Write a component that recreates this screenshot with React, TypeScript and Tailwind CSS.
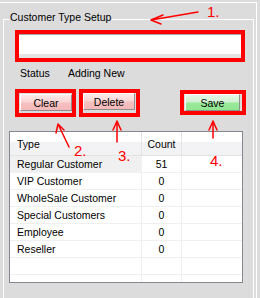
import React from "react";

const rows: [string, string][] = [
  ["Regular Customer", "51"],
  ["VIP Customer", "0"],
  ["WholeSale Customer", "0"],
  ["Special Customers", "0"],
  ["Employee", "0"],
  ["Reseller", "0"],
];

function Btn({ label, green, w }: { label: string; green?: boolean; w: string }) {
  return (
    <div
      className={
        "h-[17px] flex items-center justify-center border border-t-white border-l-white border-r-[#8f8f8f] border-b-[#8f8f8f] " +
        w +
        (green
          ? " bg-[linear-gradient(to_bottom,#e4f7e4_0%,#d2f1d2_45%,#9ae89a_55%,#90e690_100%)] border-l-[#8f8f8f]"
          : " bg-[linear-gradient(to_bottom,#fde9e9_0%,#fad6d6_45%,#f6c0c0_55%,#f4b8b8_100%)]")
      }
    >
      <span className="leading-[12px]">{label}</span>
    </div>
  );
}

export default function App() {
  return (
    <div className="w-[260px] h-[298px] bg-[#dcdcdc] overflow-hidden relative pt-[2px] font-['Liberation_Sans',Arial,sans-serif] text-[10.5px] leading-[12px] text-black">
      <div className="w-[257px] h-[296px] border-t border-r border-white pt-[16px] pl-[3px]">
        <div className="relative w-[251px] h-[290px] border-l border-t border-r border-white">
          <div className="absolute left-[5px] top-[-9px] px-[1px] bg-[#dcdcdc] leading-[12px]">
            Customer Type Setup
          </div>

          {/* text box */}
          <div className="ml-[11px] mt-[10px] w-[230px] h-[32px] border-[4px] border-[#ff0000] flex flex-col">
            <div className="h-[1px] bg-[#a3a3a3]" />
            <div className="flex-1 bg-white" />
            <div className="h-[4px] bg-[#e4e4e4]" />
          </div>

          {/* status */}
          <div className="mt-[5px] ml-[16px] flex leading-[12px]">
            <span className="w-[48px]">Status</span>
            <span>Adding New</span>
          </div>

          {/* buttons */}
          <div className="mt-[10px] flex items-start">
            <div className="ml-[11px] w-[61px] h-[28px] border-[4px] border-[#ff0000] pl-[1px] pt-[1px]">
              <Btn label="Clear" w="w-[52px]" />
            </div>
            <div className="ml-[3px] w-[61px] h-[28px] border-[4px] border-[#ff0000] pl-[0px] pt-[0px]">
              <Btn label="Delete" w="w-[52px]" />
            </div>
            <div className="ml-[40px] mt-[1px] w-[66px] h-[25px] border-[4px] border-[#ff0000] pl-[1px]">
              <Btn label="Save" green w="w-[55px]" />
            </div>
          </div>

          {/* table */}
          <div className="mt-[14px] ml-[5px] w-[234px] h-[152px] border border-[#828790] bg-white overflow-hidden">
            <div className="flex h-[24px] border-b border-[#e3e3e3] bg-[linear-gradient(to_bottom,#ffffff_0%,#ffffff_40%,#f3f3f5_45%,#f1f2f4_100%)]">
              <div className="w-[132px] border-r border-[#e3e3e3] flex items-center pl-[7px]">Type</div>
              <div className="w-[40px] border-r border-[#e3e3e3] flex items-center justify-center">Count</div>
              <div className="flex-1" />
            </div>
            {[...rows, ["", ""] as [string, string], ["", ""] as [string, string]].map(([t, c], i) => (
              <div key={i} className="flex h-[17px] border-b border-[#f0f0f0]">
                <div
                  className={
                    "w-[132px] border-r border-[#f0f0f0] flex items-center pl-[7px] " +
                    (i === 0 ? "bg-[#f0f0f0]" : "")
                  }
                >
                  {t}
                </div>
                <div className="w-[40px] border-r border-[#f0f0f0] flex items-center justify-center">{c}</div>
                <div className="flex-1" />
              </div>
            ))}
          </div>
        </div>
      </div>

      {/* annotations */}
      <svg className="absolute inset-0 pointer-events-none" width="260" height="298" viewBox="0 0 260 298">
        <g stroke="#ff0000" strokeWidth="1.5" fill="none" strokeLinecap="round">
          <path d="M198 12 L151 20 M151 20 L163 15 M151 20 L161 24" />
          <path d="M58 124 L69 147 M58 124 L56 133 M58 124 L64 130" />
          <path d="M117 121 L117 142 M117 121 L113 130 M117 121 L121 130" />
          <path d="M213 121 L213 138 M213 121 L209 130 M213 121 L217 130" />
        </g>
      </svg>
      <span className="absolute left-[207px] top-[4px] text-[15px] leading-[16px] text-[#ff0000]">1.</span>
      <span className="absolute left-[74px] top-[143px] text-[15px] leading-[16px] text-[#ff0000]">2.</span>
      <span className="absolute left-[118px] top-[148px] text-[15px] leading-[16px] text-[#ff0000]">3.</span>
      <span className="absolute left-[210px] top-[153px] text-[15px] leading-[16px] text-[#ff0000]">4.</span>
    </div>
  );
}
